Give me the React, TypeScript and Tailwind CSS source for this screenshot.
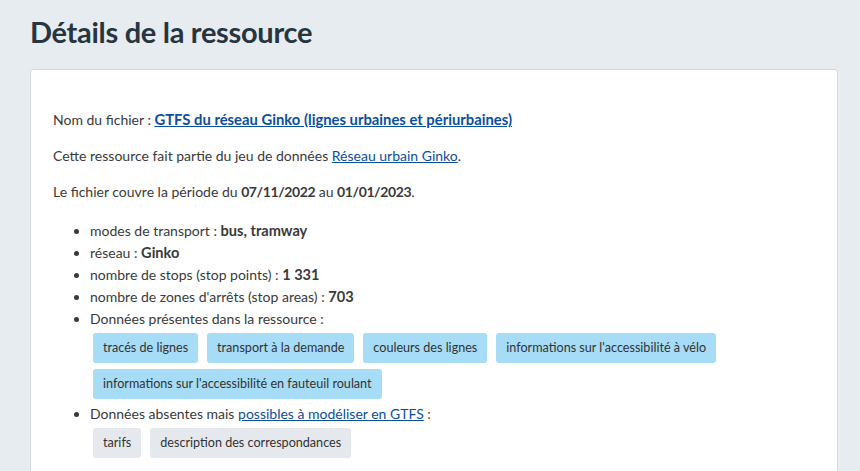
import React from "react";

const Tag = ({ children, gray }: { children: React.ReactNode; gray?: boolean }) => (
  <span
    className={
      "inline-flex h-[30px] items-center rounded-[3px] px-[10px] text-[12.6px] text-[#333] " +
      (gray ? "bg-[#e5e9ed]" : "bg-[#a6dcf5]")
    }
  >
    {children}
  </span>
);

const B = ({ children }: { children: React.ReactNode }) => (
  <b className="text-[14.6px] leading-none">{children}</b>
);

export default function App() {
  return (
    <div
      className="h-[471px] w-[860px] overflow-hidden bg-[#e7ecf0] pl-[30px] pr-[22px] pt-[13px] text-[#3a3a3a]"
      style={{ fontFamily: "Lato, 'Noto Sans', sans-serif" }}
    >
      <h1 className="text-[29px] font-bold leading-[37px] tracking-[-0.3px] text-[#26353f]">
        Détails de la ressource
      </h1>
      <div className="mt-[19px] h-[460px] rounded-t-[3px] border border-[#d3d9df] bg-white px-[22px] pt-[39px] text-[14px] leading-[22px]">
        <p>
          Nom du fichier :{" "}
          <a className="text-[14.8px] font-bold leading-none text-[#0b4ea2] underline" href="#">
            GTFS du réseau Ginko (lignes urbaines et périurbaines)
          </a>
        </p>
        <p className="mt-[14px]">
          Cette ressource fait partie du jeu de données{" "}
          <a className="text-[#0b4ea2] underline" href="#">
            Réseau urbain Ginko
          </a>
          .
        </p>
        <p className="mt-[14px]">
          Le fichier couvre la période du <b className="tracking-[-0.4px]">07/11/2022</b> au{" "}
          <b className="tracking-[-0.4px]">01/01/2023</b>.
        </p>
        <ul className="mt-[17px] list-disc pl-[37px]">
          <li>
            modes de transport : <B>bus, tramway</B>
          </li>
          <li>
            réseau : <B>Ginko</B>
          </li>
          <li>
            nombre de stops (stop points) : <B>1 331</B>
          </li>
          <li>
            nombre de zones d'arrêts (stop areas) : <B>703</B>
          </li>
          <li>
            Données présentes dans la ressource :
            <div className="mt-[3px] flex flex-wrap gap-x-[9px] gap-y-[6px] pl-[3px]">
              <Tag>tracés de lignes</Tag>
              <Tag>transport à la demande</Tag>
              <Tag>couleurs des lignes</Tag>
              <Tag>informations sur l'accessibilité à vélo</Tag>
              <Tag>informations sur l'accessibilité en fauteuil roulant</Tag>
            </div>
          </li>
          <li className="mt-[4px]">
            Données absentes mais{" "}
            <a className="text-[#0b4ea2] underline" href="#">
              possibles à modéliser en GTFS
            </a>{" "}
            :
            <div className="mt-[3px] flex flex-wrap gap-x-[9px] gap-y-[6px] pl-[3px]">
              <Tag gray>tarifs</Tag>
              <Tag gray>description des correspondances</Tag>
            </div>
          </li>
        </ul>
      </div>
    </div>
  );
}
